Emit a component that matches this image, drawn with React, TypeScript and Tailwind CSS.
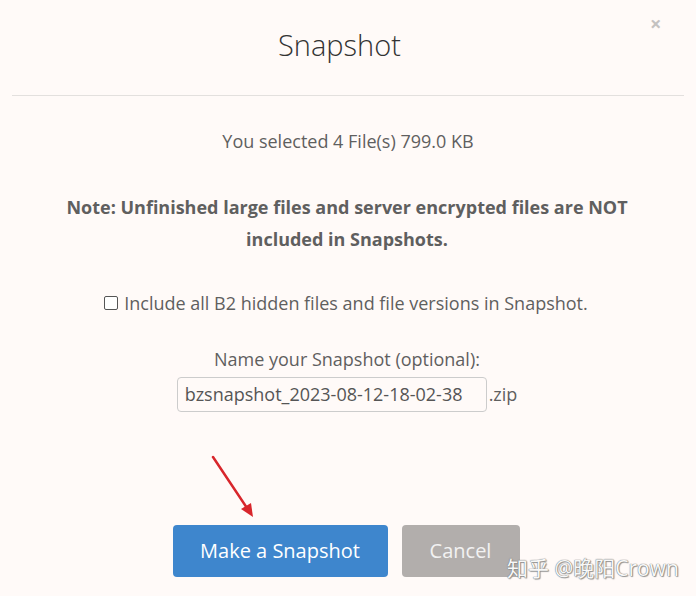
import React from "react";

export default function App() {
  return (
    <div
      className="relative w-[696px] h-[596px] overflow-hidden bg-[#fffaf8] text-[#5f5f5f]"
      style={{ fontFamily: '"Open Sans", "Noto Sans CJK SC", sans-serif' }}
    >
      <button className="absolute left-[650px] top-[14px] text-[20px] leading-none font-bold text-[#c4c2c1]">
        ×
      </button>
      <div className="mx-[12px] h-[96px] border-b border-[#e3e0de] flex items-start justify-center pt-[26px] pr-[17px]">
        <h1 className="text-[29px] leading-[38px] font-light text-[#333]">Snapshot</h1>
      </div>
      <div className="flex flex-col items-center text-[18px]">
        <p className="mt-[32px] leading-[26px]">You selected 4 File(s) 799.0 KB</p>
        <p className="mt-[37px] w-[580px] text-center font-bold leading-[32px] mr-[2px]">
          Note: Unfinished large files and server encrypted files are NOT included in Snapshots.
        </p>
        <label className="mt-[35px] flex items-center leading-[26px] mr-[4px]">
          <span className="inline-block w-[14px] h-[14px] border border-[#555] rounded-[2px] mr-[6px] bg-white" />
          Include all B2 hidden files and file versions in Snapshot.
        </label>
        <p className="mt-[30px] leading-[26px] mr-[2px]">Name your Snapshot (optional):</p>
        <div className="mt-[5px] flex items-center mr-[2px]">
          <div className="w-[310px] h-[35px] border border-[#ccc] rounded-[4px] bg-[#fffaf8] flex items-center px-[7px] text-[#555]">
            bzsnapshot_2023-08-12-18-02-38
          </div>
          <span className="ml-[2px]">.zip</span>
        </div>
        <div className="mt-[113px] flex gap-[14px] mr-[4px]">
          <button className="w-[215px] h-[52px] rounded-[4px] bg-[#3e86cd] text-white text-[20px]">
            Make a Snapshot
          </button>
          <button className="w-[118px] h-[52px] rounded-[4px] bg-[#b2aeac] text-[#f2f2f2] text-[20px]">
            Cancel
          </button>
        </div>
      </div>
      <svg className="absolute left-[205px] top-[450px]" width="60" height="75" viewBox="0 0 60 75">
        <line x1="8" y1="7" x2="44" y2="61" stroke="#d8262c" strokeWidth="2.5" strokeLinecap="round" />
        <polygon points="48,67 36,59 46,53" fill="#d8262c" />
      </svg>
      <div
        className="absolute left-[507px] top-[553px] text-[21px] leading-[30px] text-[#f8f8f8] whitespace-nowrap"
        style={{ textShadow: "0 0 1px #777, 0 0 1px #777, 1px 1px 1px #999" }}
      >
        知乎 @晚阳Crown
      </div>
    </div>
  );
}
